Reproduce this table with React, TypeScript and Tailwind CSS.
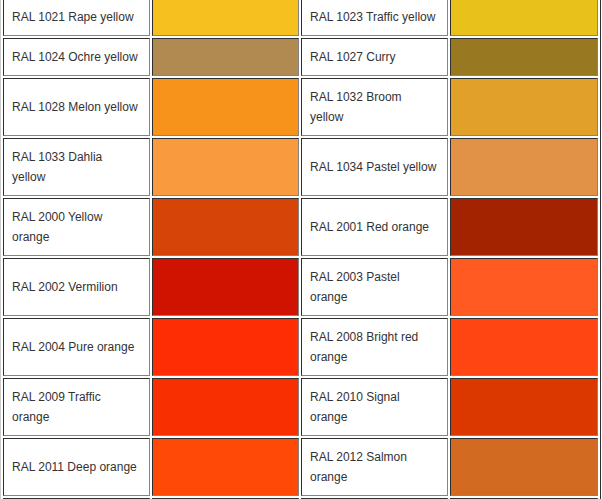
import React from "react";

type Cell = { name: React.ReactNode; color: string };

const rows: [Cell, Cell][] = [
  [
    { name: "RAL 1021 Rape yellow", color: "#F6C11F" },
    { name: "RAL 1023 Traffic yellow", color: "#E8C21A" },
  ],
  [
    { name: "RAL 1024 Ochre yellow", color: "#B18A52" },
    { name: "RAL 1027 Curry", color: "#997822" },
  ],
  [
    { name: "RAL 1028 Melon yellow", color: "#F7921B" },
    { name: <>RAL 1032 Broom<br />yellow</>, color: "#E0A02A" },
  ],
  [
    { name: <>RAL 1033 Dahlia<br />yellow</>, color: "#F89A3D" },
    { name: "RAL 1034 Pastel yellow", color: "#E29246" },
  ],
  [
    { name: <>RAL 2000 Yellow<br />orange</>, color: "#D64408" },
    { name: "RAL 2001 Red orange", color: "#A32300" },
  ],
  [
    { name: "RAL 2002 Vermilion", color: "#CF1300" },
    { name: <>RAL 2003 Pastel<br />orange</>, color: "#FE5A22" },
  ],
  [
    { name: "RAL 2004 Pure orange", color: "#FE2D03" },
    { name: <>RAL 2008 Bright red<br />orange</>, color: "#FF4512" },
  ],
  [
    { name: <>RAL 2009 Traffic<br />orange</>, color: "#F82F00" },
    { name: <>RAL 2010 Signal<br />orange</>, color: "#DB3800" },
  ],
  [
    { name: "RAL 2011 Deep orange", color: "#FF4A07" },
    { name: <>RAL 2012 Salmon<br />orange</>, color: "#D26A22" },
  ],
];

const cellBorder =
  "border border-t-[#2e2e2e] border-l-[#2e2e2e] border-b-[#848484] border-r-[#848484]";

export default function App() {
  return (
    <div className="bg-white w-[602px] h-[499px] overflow-hidden">
      <div
        className="mt-[-5px] w-[601px] border border-t-[#cccccc] border-l-[#cccccc] border-b-[#2e2e2e] border-r-[#2e2e2e] p-[2px] grid grid-cols-[147px_147px_147px_148px] gap-[2px] text-[12px] leading-[20px] text-[#333333]"
        style={{ fontFamily: '"Liberation Sans", Arial, sans-serif' }}
      >
        {rows.map((r, i) => (
          <React.Fragment key={i}>
            {r.map((c, j) => (
              <React.Fragment key={j}>
                <div className={`${cellBorder} flex items-center px-2 py-2 whitespace-nowrap`}>
                  <span>{c.name}</span>
                </div>
                <div className={cellBorder} style={{ backgroundColor: c.color }} />
              </React.Fragment>
            ))}
          </React.Fragment>
        ))}
        <div className={`${cellBorder} h-[38px]`} />
        <div className={`${cellBorder} h-[38px] bg-[#923E25]`} />
        <div className={`${cellBorder} h-[38px]`} />
        <div className={`${cellBorder} h-[38px] bg-[#A72920]`} />
      </div>
    </div>
  );
}
